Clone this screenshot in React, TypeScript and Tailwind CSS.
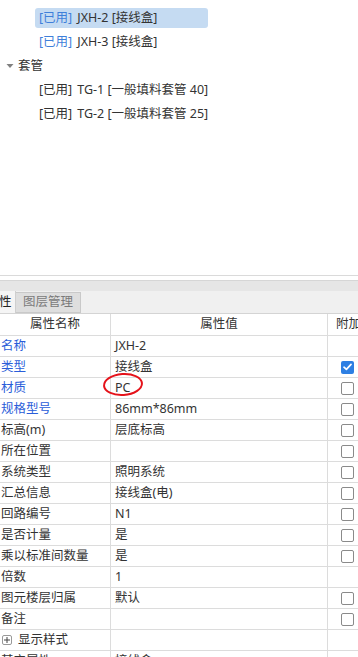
import React from "react";

const F = "font-['Noto_Sans','Noto_Sans_CJK_SC',sans-serif]";

type Row = { name: string; value: string; blue?: boolean; check?: "on" | "off" | null; plus?: boolean };

const rows: Row[] = [
  { name: "名称", value: "JXH-2", blue: true, check: null },
  { name: "类型", value: "接线盒", blue: true, check: "on" },
  { name: "材质", value: "PC", blue: true, check: "off" },
  { name: "规格型号", value: "86mm*86mm", blue: true, check: "off" },
  { name: "标高(m)", value: "层底标高", check: "off" },
  { name: "所在位置", value: "", check: "off" },
  { name: "系统类型", value: "照明系统", check: "off" },
  { name: "汇总信息", value: "接线盒(电)", check: "off" },
  { name: "回路编号", value: "N1", check: "off" },
  { name: "是否计量", value: "是", check: "off" },
  { name: "乘以标准间数量", value: "是", check: "off" },
  { name: "倍数", value: "1", check: null },
  { name: "图元楼层归属", value: "默认", check: "off" },
  { name: "备注", value: "", check: "off" },
  { name: "显示样式", value: "", check: null, plus: true },
  { name: "其它属性", value: "接线盒", check: null },
];

function TreeItem({ label, selected, blueTag }: { label: string; selected?: boolean; blueTag?: boolean }) {
  return (
    <div className="h-6 flex items-center">
      <div
        className={`ml-[35px] h-5 rounded-[3px] pl-1 flex items-center whitespace-nowrap text-[12.5px] leading-5 text-[#333] ${
          selected ? "bg-[#c5dbf2] w-[173px]" : ""
        }`}
      >
        <span className={blueTag ? "text-[#3f80da]" : "text-[#333]"}>[已用]</span>
        <span className="ml-[5px]">{label}</span>
      </div>
    </div>
  );
}

function Checkbox({ on }: { on: boolean }) {
  if (on) {
    return (
      <div className="w-[13px] h-[13px] rounded-[2px] bg-[#2d7fe3] flex items-center justify-center">
        <svg width="9" height="8" viewBox="0 0 9 8">
          <path d="M1 4.2 L3.4 6.4 L8 1.4" stroke="white" strokeWidth="1.7" fill="none" strokeLinecap="round" strokeLinejoin="round" />
        </svg>
      </div>
    );
  }
  return <div className="w-[13px] h-[13px] rounded-[2px] border border-[#8a8a8a] bg-white" />;
}

export default function App() {
  return (
    <div className={`w-[358px] h-[657px] overflow-hidden bg-white relative ${F}`}>
      {/* tree */}
      <div className="h-[275px] overflow-hidden">
        <div className="mt-[-18px]">
          <TreeItem label="JXH-1 [接线盒]" blueTag />
          <TreeItem label="JXH-2 [接线盒]" blueTag selected />
          <TreeItem label="JXH-3 [接线盒]" blueTag />
          <div className="h-6 flex items-center">
            <svg width="8" height="6" viewBox="0 0 8 6" className="ml-[6px]">
              <path d="M0.5 1 L7.5 1 L4 5 Z" fill="#808080" />
            </svg>
            <span className="ml-[4px] text-[12.5px] leading-5 text-[#333]">套管</span>
          </div>
          <TreeItem label="TG-1 [一般填料套管 40]" />
          <TreeItem label="TG-2 [一般填料套管 25]" />
        </div>
      </div>
      <div className="h-px bg-[#dadada]" />
      <div className="h-[4px] bg-white" />
      <div className="h-[11px] bg-[#e6e6e6] border-t border-[#d6d6d6]" />
      {/* tabs */}
      <div className="h-[22px] bg-[#f0f0f0] flex items-stretch">
        <div className="w-[16px] border-r border-[#cfcfcf] bg-[#f5f5f5] flex items-center text-[12.5px] text-[#222] leading-none overflow-hidden">
          <span className="ml-[-1px]">性</span>
        </div>
        <div className="w-[65px] mt-[1px] bg-[#dedede] border border-l-0 border-[#c9c9c9] flex items-center justify-center text-[12.5px] text-[#7a7a7a] leading-none">
          图层管理
        </div>
      </div>
      {/* table */}
      <div className="border-t border-[#d4d4d4] text-[12.5px] text-[#333]">
        <div className="h-[22px] flex border-b border-[#dcdcdc] bg-white">
          <div className="w-[111px] shrink-0 border-r border-[#dcdcdc] flex items-center justify-center leading-none">属性名称</div>
          <div className="w-[217px] shrink-0 border-r border-[#dcdcdc] flex items-center justify-center leading-none">属性值</div>
          <div className="flex-1 flex items-center pl-[8px] leading-none whitespace-nowrap overflow-hidden">附加</div>
        </div>
        {rows.map((r) => (
          <div key={r.name} className="h-[21px] flex border-b border-[#dcdcdc]">
            <div className="w-[111px] shrink-0 border-r border-[#dcdcdc] flex items-center leading-none">
              {r.plus ? (
                <>
                  <div className="ml-[2px] w-[10px] h-[10px] border border-[#999] rounded-[2px] flex items-center justify-center">
                    <svg width="6" height="6" viewBox="0 0 6 6">
                      <path d="M0 3 H6 M3 0 V6" stroke="#444" strokeWidth="1" />
                    </svg>
                  </div>
                  <span className="ml-[6px]">{r.name}</span>
                </>
              ) : (
                <span className={`ml-[1px] ${r.blue ? "text-[#2a5dd9]" : ""}`}>{r.name}</span>
              )}
            </div>
            <div className="w-[217px] shrink-0 border-r border-[#dcdcdc] flex items-center pl-[4px] leading-none">{r.value}</div>
            <div className="flex-1 flex items-center pl-[13px]">
              {r.check === "on" && <Checkbox on />}
              {r.check === "off" && <Checkbox on={false} />}
            </div>
          </div>
        ))}
      </div>
      {/* red annotation around PC */}
      <div className="absolute left-[103px] top-[373px] w-[40px] h-[23px] rounded-[50%] border-2 border-[#e5121a] rotate-[-4deg]" />
    </div>
  );
}
